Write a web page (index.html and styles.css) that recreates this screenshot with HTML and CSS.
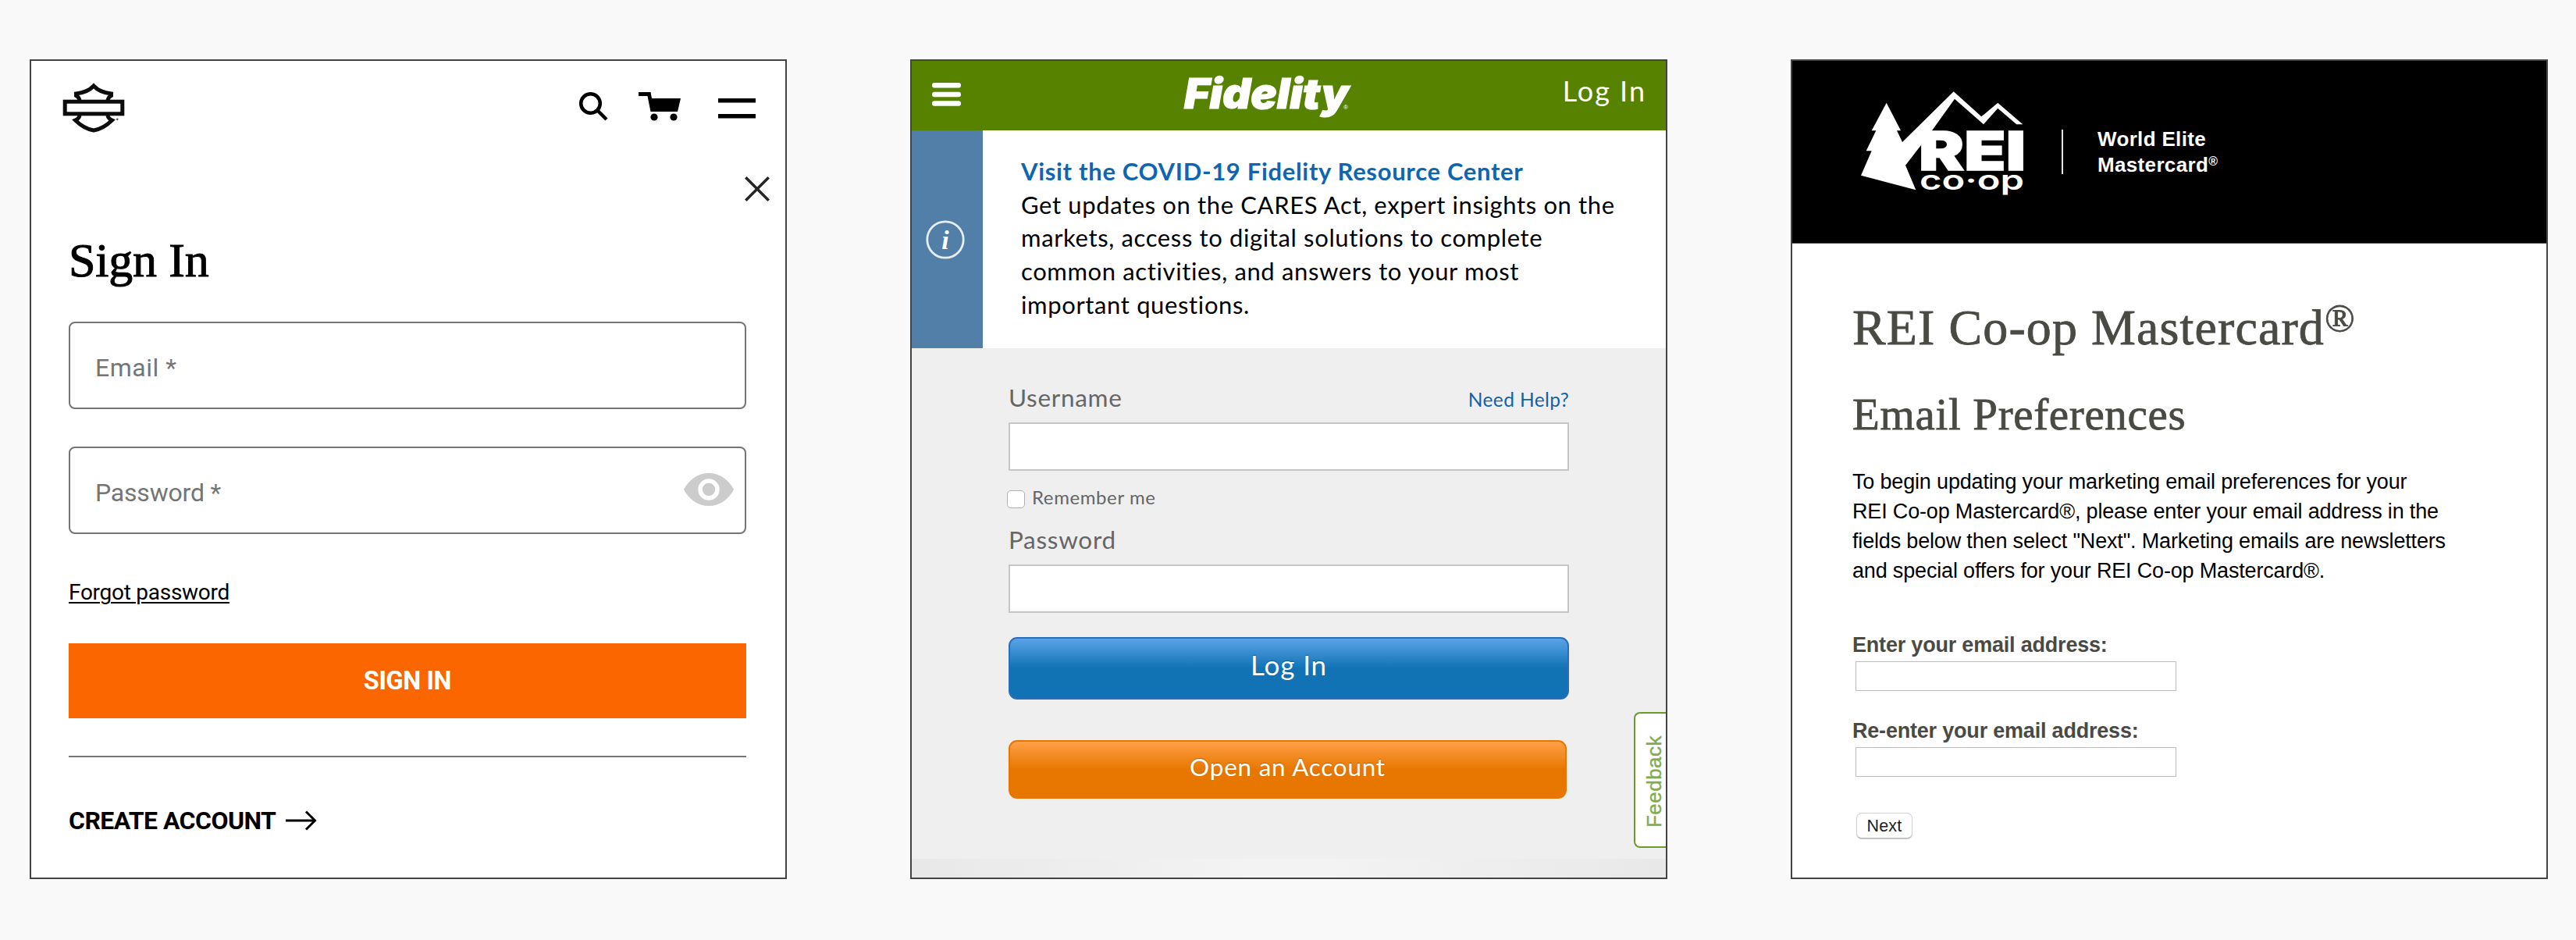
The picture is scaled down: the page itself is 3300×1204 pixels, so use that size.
FILE: index.html
```html
<!DOCTYPE html>
<html lang="en">
<head>
<meta charset="utf-8">
<title>Sign in and preference forms</title>
<link rel="stylesheet" href="styles.css">
</head>
<body>
<main class="board">

<section class="card harley">
  <header class="hd-header">
    <svg class="hd-logo" width="82" height="66" viewBox="0 0 82 66" fill="none" stroke="#0b0c0b" stroke-width="5">
      <path d="M22 25C22 21 20.500 19 17.500 17.500V15C27 14 35 10.500 40 5C45 10.500 53 14 62.500 15V17.500C59.500 19 58 21 58 25"/>
      <rect x="3.200" y="25.200" width="73.600" height="15.600"/>
      <path d="M22 42C22 45.500 20 47.500 16.500 49C23 55.500 31 60.500 40 62C49 60.500 57 55.500 63.500 49C60 47.500 58 45.500 58 42"/>
      <circle cx="70.300" cy="47.800" r=".8" stroke-width="1"/>
    </svg>
    <nav class="hd-nav">
      <svg class="hd-search" width="37" height="37" viewBox="0 0 37 37" fill="none" stroke="#000" stroke-width="4.500">
        <circle cx="14.500" cy="14.500" r="12.300"/><path d="M23.500 23.500L35 35"/>
      </svg>
      <svg class="hd-cart" width="54" height="37" viewBox="0 0 54 37">
        <path d="M0 0H15.500L17 8H54L50 25H15.500L11.500 5H0Z"/>
        <circle cx="20" cy="32" r="4.600"/><circle cx="45" cy="32" r="4.600"/>
      </svg>
      <svg width="48" height="26" viewBox="0 0 48 26"><path d="M0 0H48V5.500H0ZM0 20H48V25.500H0Z"/></svg>
    </nav>
  </header>
  <div class="hd-close">
    <svg width="32" height="32" viewBox="0 0 32 32" fill="none" stroke="#262626" stroke-width="3.600"><path d="M1.300 1.300L30.700 30.700M30.700 1.300L1.300 30.700"/></svg>
  </div>
  <div class="hd-body">
    <h1 class="hd-title">Sign In</h1>
    <div class="hd-field hd-email">Email *</div>
    <div class="hd-field hd-password"><span>Password *</span>
      <svg width="64" height="42" viewBox="0 0 64 42"><path d="M0 21C7 8 18 0 32 0S57 8 64 21C57 34 46 42 32 42S7 34 0 21Z" fill="#ccc"/><circle cx="32" cy="21" r="11" fill="#ccc" stroke="#fff" stroke-width="5.500"/></svg>
    </div>
    <a class="hd-forgot">Forgot password</a>
    <button class="hd-button">SIGN IN</button>
    <hr class="hd-rule">
    <a class="hd-create">CREATE ACCOUNT
      <svg width="40" height="26" viewBox="0 0 40 26" fill="none" stroke="#000" stroke-width="3"><path d="M0 13H38M26 1.500L37.500 13L26 24.500"/></svg>
    </a>
  </div>
</section>

<section class="card fidelity">
  <header class="fid-header">
    <svg class="fid-menu" width="37" height="30" viewBox="0 0 37 30" fill="#fff"><rect width="37" height="6.500" rx="3"/><rect y="11.700" width="37" height="6.500" rx="3"/><rect y="23.300" width="37" height="6.500" rx="3"/></svg>
    <svg class="fid-logo" width="234" height="80" viewBox="0 -10 234 80">
      <text class="fid-word" x="18" y="46" textLength="211" lengthAdjust="spacingAndGlyphs">Fidelity</text>
      <text class="fid-reg" x="222" y="47">®</text>
    </svg>
    <a class="fid-login">Log In</a>
  </header>
  <div class="fid-notice">
    <aside class="fid-info">
      <svg width="50" height="50" viewBox="0 0 50 50"><circle cx="25" cy="25" r="23.200" fill="none" stroke="#e6edf3" stroke-width="2.800"/><text class="fid-i" x="25" y="37" text-anchor="middle">i</text></svg>
    </aside>
    <p class="fid-text"><strong>Visit the COVID-19 Fidelity Resource Center</strong><br>Get updates on the CARES Act, expert insights on the<br>markets, access to digital solutions to complete<br>common activities, and answers to your most<br>important questions.</p>
  </div>
  <form class="fid-form">
    <div class="fid-row"><label class="fid-label">Username</label><a class="fid-help">Need Help?</a></div>
    <div class="fid-input"></div>
    <div class="fid-remember"><span class="fid-check"></span><label>Remember me</label></div>
    <label class="fid-label">Password</label>
    <div class="fid-input"></div>
    <button type="button" class="fid-button fid-blue">Log In</button>
    <button type="button" class="fid-button fid-orange">Open an Account</button>
  </form>
  <div class="fid-strip"></div>
  <div class="fid-feedback"><span>Feedback</span></div>
</section>

<section class="card rei">
  <header class="rei-header">
    <svg class="rei-logo" width="216" height="145" viewBox="0 0 216 145" fill="#fff">
      <path d="M36.700 21.700L55 57.300H50L57 72L122.700 7.300L158.300 39.300L179.300 21.700L211.300 49.300H203.300L179.300 28.700L161 49.300L124 16.700L95 57.300L86 78L81.700 75L61 101.700L74.300 133.300L4 114.700L17.700 83.300H10.700L23.300 57.300H17.700Z"/>
      <text class="rei-word" x="78" y="108" textLength="137" lengthAdjust="spacingAndGlyphs">REI</text>
      <text class="rei-coop" x="79" y="133.300" textLength="134" lengthAdjust="spacingAndGlyphs">co·op</text>
    </svg>
    <span class="rei-divider"></span>
    <p class="rei-tag">World Elite<br>Mastercard<sup>®</sup></p>
  </header>
  <div class="rei-body">
    <h1 class="rei-h1">REI Co-op Mastercard<sup>®</sup></h1>
    <h2 class="rei-h2">Email Preferences</h2>
    <p class="rei-copy">To begin updating your marketing email preferences for your<br>REI Co-op Mastercard®, please enter your email address in the<br>fields below then select "Next". Marketing emails are newsletters<br>and special offers for your REI Co-op Mastercard®.</p>
    <label class="rei-label">Enter your email address:</label>
    <div class="rei-input"></div>
    <label class="rei-label rei-second">Re-enter your email address:</label>
    <div class="rei-input"></div>
    <button class="rei-next">Next</button>
  </div>
</section>

</main>
</body>
</html>
```
FILE: styles.css
```css
* { box-sizing: border-box; }
body { margin: 0; background: #f9f9f9; color: #000; }
h1, h2, p { margin: 0; font-weight: 400; }
svg { display: block; flex: none; }
button { font: inherit; padding: 0; border: 0; }

.board { display: flex; gap: 158px; padding: 76px 38px 0; }
.card { position: relative; display: flex; flex-direction: column; flex: none; width: 970px; height: 1050px; border: 2px solid #434343; background: #fff; overflow: hidden; }

/* Motorcycle sign in */
.harley { font-family: Roboto, sans-serif; }
.hd-header { display: flex; justify-content: space-between; padding: 27px 38px 0 40px; }
.hd-nav { display: flex; align-items: flex-start; padding-top: 13px; }
.hd-cart { margin: 0 48px 0 39px; }
.hd-nav svg:last-child { margin-top: 8px; }
.hd-close { display: flex; justify-content: flex-end; padding: 55px 20px 0 0; }
.hd-body { display: flex; flex-direction: column; padding: 40px 50px 0 48px; }
.hd-title { font: 62px/70px "Liberation Serif", serif; letter-spacing: -.2px; margin-bottom: 44px; -webkit-text-stroke: 1px #000; }
.hd-field { display: flex; align-items: center; justify-content: space-between; height: 112px; padding: 6px 14px 0 32px; border: 2px solid #757575; border-radius: 8px; font-size: 32px; color: #757575; }
.hd-email { letter-spacing: .5px; }
.hd-password { margin-top: 48px; letter-spacing: -.2px; }
.hd-password svg { margin-bottom: 8px; }
.hd-forgot { align-self: flex-start; margin-top: 59px; font-size: 28px; line-height: 32px; letter-spacing: -.27px; text-decoration: underline; text-decoration-thickness: 2px; text-underline-offset: 3px; }
.hd-button { height: 96px; margin-top: 49px; background: #fb6600; color: #fff; font-size: 32.500px; font-weight: 700; letter-spacing: -.4px; }
.hd-rule { width: 100%; height: 2px; margin: 48px 0 0; border: 0; background: #757575; }
.hd-create { display: flex; align-items: center; gap: 13px; margin-top: 61px; font-size: 32px; font-weight: 700; line-height: 40px; letter-spacing: -.55px; }

/* Brokerage log in */
.fidelity { background: #efefef; font-family: Lato, sans-serif; }
.fid-header { display: flex; align-items: center; justify-content: space-between; height: 89px; padding: 0 25px 0 26px; background: #568200; }
.fid-menu { margin-bottom: 4px; }
.fid-word { font: italic 900 54px Inter, sans-serif; fill: #fff; stroke: #fff; stroke-width: 1.2px; }
.fid-reg { font: 8px "Liberation Sans", sans-serif; fill: #fff; }
.fid-login { padding-bottom: 14px; font-size: 36px; letter-spacing: 2px; color: #fff; }
.fid-notice { display: flex; height: 279px; background: #fff; }
.fid-info { display: flex; align-items: center; justify-content: center; width: 91px; padding-right: 6px; background: #527fa7; }
.fid-i { font: italic 700 34px "Liberation Serif", serif; fill: #fff; }
.fid-text { padding: 31px 0 0 49px; font-size: 31px; line-height: 42.67px; letter-spacing: .63px; white-space: nowrap; }
.fid-text strong { color: #0f66b0; letter-spacing: .68px; }
.fid-form { display: flex; flex-direction: column; padding: 43px 124px 0; color: #666; }
.fid-row { display: flex; justify-content: space-between; height: 40px; }
.fid-label { font-size: 31.500px; line-height: 40px; letter-spacing: .7px; }
.fid-help { font-size: 24.500px; line-height: 45px; letter-spacing: .4px; color: #0f62ad; }
.fid-input { height: 62px; margin-top: 12px; border: 2px solid #c6c6c6; background: #fff; }
.fid-remember { display: flex; align-items: center; gap: 9px; height: 30px; margin: 20px 0 18px -2px; font-size: 24px; letter-spacing: .6px; }
.fid-remember label { padding-bottom: 4px; }
.fid-check { width: 23px; height: 23px; margin-top: 2px; border: 1px solid #b0b0b0; border-radius: 5px; background: #fff; }
.fid-button { color: #fff; text-align: center; border-radius: 11px; }
.fid-blue { height: 80px; margin-top: 31px; padding-bottom: 10px; border: 2px solid #2a6dbb; font-size: 35px; letter-spacing: .9px; background: linear-gradient(#5ba3e8, #1173b4 50%, #1173b6); text-shadow: 0 -1px 1px #0f5a94; }
.fid-orange { width: 715px; height: 75px; margin-top: 52px; padding-bottom: 7px; border: 2px solid #e67608; font-size: 31.500px; letter-spacing: .75px; background: linear-gradient(#ffa046, #e77700 50%, #e77700); text-shadow: 0 -1px 1px #c06200; }
.fid-strip { height: 24px; margin-top: auto; background: linear-gradient(90deg, #e8e8e8, #f3f3f3 45%, #f3f3f3 55%, #e8e8e8); }
.fid-feedback { position: absolute; top: 834px; right: 0; display: flex; align-items: center; justify-content: center; width: 41px; height: 174px; padding: 4px 0 0 8px; border: 2px solid #6b9c2a; border-right: 0; border-radius: 8px 0 0 8px; background: #fff; }
.fid-feedback span { writing-mode: vertical-rl; transform: rotate(180deg); font: 26px/30px "Liberation Sans", sans-serif; letter-spacing: .48px; color: #82ab4f; -webkit-text-stroke: .4px #82ab4f; }

/* Email preferences */
.rei { font-family: "Liberation Sans", sans-serif; }
.rei-header { display: flex; align-items: center; height: 234px; padding-left: 84px; border-bottom: 1px solid #444; background: #000; color: #fff; }
.rei-logo { align-self: flex-start; margin-top: 32px; }
.rei-word { font: 900 69px Inter, sans-serif; stroke: #fff; stroke-width: 1.5px; }
.rei-coop { font: 600 34px Inter, sans-serif; }
.rei-divider { width: 2px; height: 57px; margin: 0 45px; background: #e5e5e5; }
.rei-tag { margin-left: -1px; font-size: 26px; font-weight: 700; line-height: 32.500px; letter-spacing: .34px; }
.rei-tag sup { font-size: 16px; line-height: 0; vertical-align: 8px; }
.rei-body { display: flex; flex-direction: column; align-items: flex-start; padding: 72px 0 0 77px; }
.rei-h1, .rei-h2 { font-family: "Liberation Serif", serif; color: #4a4a45; -webkit-text-stroke: .8px #4a4a45; }
.rei-h1 { font-size: 64px; line-height: 70px; margin-top: 1px; letter-spacing: 1.1px; }
.rei-h1 sup { font-size: 51px; line-height: 0; vertical-align: 16px; }
.rei-h2 { margin-top: 46px; font-size: 57px; line-height: 60px; letter-spacing: .65px; }
.rei-copy { margin-top: 37px; font-size: 27px; line-height: 38px; letter-spacing: -.17px; white-space: nowrap; }
.rei-label { margin-top: 60px; font-size: 27px; font-weight: 700; line-height: 32px; letter-spacing: -.2px; color: #4a4a45; }
.rei-second { margin-top: 35px; }
.rei-input { width: 411px; height: 38px; margin: 5px 0 0 4px; border: 1px solid #bdbdbd; }
.rei-next { width: 72px; height: 33px; margin: 46px 0 0 5px; padding-top: 2px; border: 1px solid #d2d2d2; border-bottom-color: #b5b5b5; border-radius: 7px; background: #fff; box-shadow: 0 1px 1px #ccc; font-size: 21.500px; letter-spacing: .2px; color: #222; }
```
